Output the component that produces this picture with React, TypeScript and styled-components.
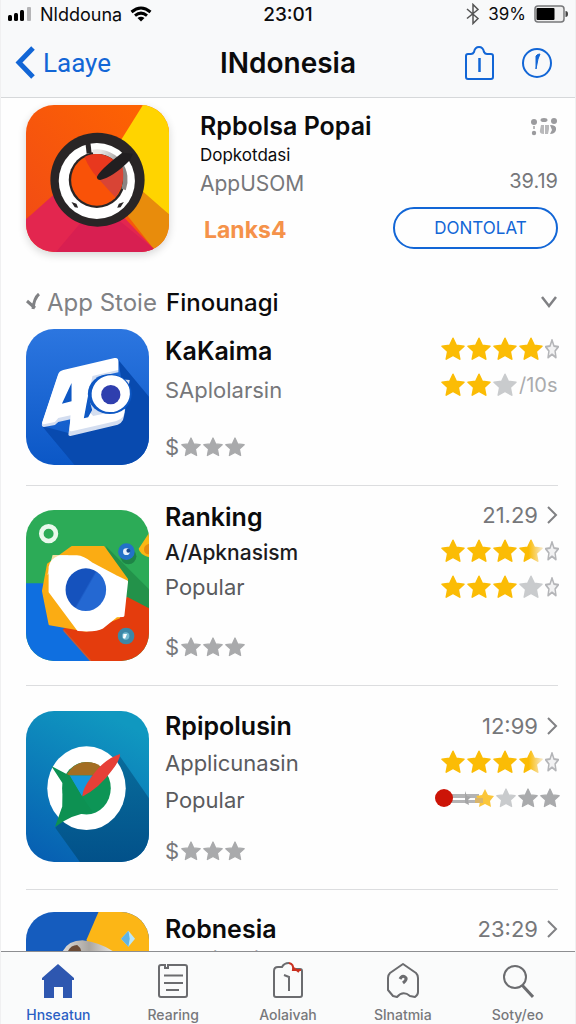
import React from "react";
import styled, { createGlobalStyle } from "styled-components";

const BLUE = "#1266d6";
const GOLD = "#fbbc05";
const GREY = "#76777a";

const GlobalStyle = createGlobalStyle`
  * { box-sizing: border-box; }
  body { margin: 0; background: #fefefe; font-family: Inter, "Liberation Sans", sans-serif; color: #0b0b0c; }
  h1, h2, h3, p, ul { margin: 0; padding: 0; font-size: inherit; font-weight: inherit; }
  button { font: inherit; background: none; border: 0; padding: 0; cursor: pointer; color: inherit; }
  a { color: inherit; text-decoration: none; }
  svg { display: block; flex: none; }
`;

const Screen = styled.div`
  height: 100vh;
  display: flex;
  flex-direction: column;
  border: solid #f0f0f1;
  border-width: 0 1px;
`;

const Header = styled.header`
  background: #f8f9fa;
  border-bottom: 1px solid #d6d8da;
`;

const StatusBar = styled.div`
  display: grid;
  grid-template-columns: 1fr auto 1fr;
  align-items: center;
  height: 28px;
  padding: 0 7px;
  font-size: 18px;
`;

const StatusSide = styled.div<{ $end?: boolean }>`
  display: flex;
  align-items: center;
  gap: 8px;
  justify-content: ${(p) => (p.$end ? "flex-end" : "flex-start")};
`;

const BatteryLevel = styled.span`
  font-size: 17px;
`;

const Clock = styled.time`
  font-size: 19px;
  font-weight: 500;
`;

const TitleBar = styled.div`
  display: grid;
  grid-template-columns: 1fr auto 1fr;
  align-items: center;
  height: 69px;
  padding: 0 14px;
`;

const BackButton = styled.button`
  display: flex;
  align-items: center;
  gap: 8px;
  justify-self: start;
  color: ${BLUE};
  font-family: Roboto, "Liberation Sans", sans-serif;
  font-size: 26px;
`;

const PageTitle = styled.h1`
  font-size: 28px;
  font-weight: 600;
`;

const TitleActions = styled.div`
  display: flex;
  justify-self: end;
  align-items: center;
  gap: 26px;
  padding-right: 8px;
  color: ${BLUE};
`;

const Content = styled.main`
  flex: 1;
  min-height: 0;
  overflow-y: auto;
  scrollbar-width: none;
`;

const AppIcon = styled.div<{ $shadow?: boolean }>`
  flex: none;
  border-radius: 28px;
  overflow: hidden;
  align-self: flex-start;
  box-shadow: ${(p) => (p.$shadow ? "0 3px 8px rgba(0,0,0,.16)" : "none")};
`;

const Featured = styled.section`
  display: flex;
  padding: 7px 17px 0 25px;
`;

const FeaturedText = styled.div`
  flex: 1;
  min-width: 0;
  padding: 5px 0 0 31px;
`;

const FeaturedSide = styled.div`
  display: flex;
  flex-direction: column;
  align-items: flex-end;
  padding-top: 12px;
`;

const FeaturedTitle = styled.h2`
  font-size: 25px;
  font-weight: 600;
  line-height: 32px;
  white-space: nowrap;
`;

const FeaturedSubtitle = styled.p`
  font-size: 17px;
  line-height: 26px;
`;

const FeaturedVendor = styled.p`
  font-size: 21px;
  line-height: 32px;
  color: ${GREY};
`;

const Brand = styled.p`
  font-size: 23px;
  font-weight: 700;
  line-height: 32px;
  padding: 14px 0 0 4px;
  color: #f5924a;
`;

const FeaturedScore = styled.span`
  font-size: 20px;
  line-height: 24px;
  margin: 32px 0 14px;
  color: ${GREY};
`;

const GetButton = styled.button`
  width: 165px;
  height: 42px;
  padding-left: 10px;
  border: 2px solid ${BLUE};
  border-radius: 21px;
  color: ${BLUE};
  font-size: 17px;
`;

const SectionBar = styled.div`
  display: grid;
  grid-template-columns: 140px 1fr auto;
  align-items: center;
  height: 36px;
  margin-top: 32px;
  padding: 0 17px 0 25px;
  font-size: 24px;
`;

const SectionSource = styled.span`
  display: flex;
  align-items: center;
  gap: 6px;
  color: #808184;
  white-space: nowrap;
`;

const SectionTitle = styled.h2`
  font-weight: 500;
`;

const List = styled.ul`
  list-style: none;
  padding: 0 17px 0 25px;
`;

const Row = styled.li<{ $height: number }>`
  display: flex;
  gap: 16px;
  height: ${(p) => p.$height}px;
  border-bottom: 1px solid #dcdddf;
`;

const IconSlot = styled.div<{ $top: number }>`
  padding-top: ${(p) => p.$top}px;
`;

const Details = styled.div<{ $top: number }>`
  flex: 1;
  display: flex;
  flex-direction: column;
  min-width: 0;
  padding: ${(p) => p.$top}px 0 20px;
`;

const Name = styled.h3<{ $pitch: number }>`
  font-size: 25px;
  font-weight: 600;
  line-height: ${(p) => p.$pitch}px;
  white-space: nowrap;
`;

const Line = styled.p<{ $tone?: string; $pitch: number; $strong?: boolean }>`
  font-size: ${(p) => (p.$strong ? 21 : 22)}px;
  font-weight: ${(p) => (p.$strong ? 500 : 400)};
  line-height: ${(p) => p.$pitch}px;
  color: ${(p) => p.$tone || "#5a5b5e"};
  white-space: nowrap;
`;

const Price = styled.div`
  display: flex;
  align-items: center;
  gap: 2px;
  margin-top: auto;
  font-size: 22px;
  line-height: 36px;
  color: ${GREY};
`;

const PriceSign = styled.span`
  width: 14px;
`;

const Meta = styled.div<{ $top: number }>`
  display: flex;
  flex-direction: column;
  width: 117px;
  padding-top: ${(p) => p.$top}px;
`;

const MetaLine = styled.div<{ $end?: boolean }>`
  display: flex;
  align-items: center;
  justify-content: ${(p) => (p.$end ? "flex-end" : "flex-start")};
  gap: ${(p) => (p.$end ? 8 : 2)}px;
  height: 36px;
  font-size: 22px;
  color: ${GREY};
`;

const Votes = styled.span`
  color: #aaabad;
  font-size: 20px;
`;

const Progress = styled.div`
  display: flex;
  align-items: center;
  gap: 2px;
  margin-left: -6px;
`;

const TabBar = styled.nav`
  display: grid;
  grid-template-columns: repeat(5, 1fr);
  height: 73px;
  background: #fafbfb;
  border-top: 1px solid #8d8e91;
`;

const Tab = styled.a<{ $active?: boolean }>`
  display: flex;
  flex-direction: column;
  align-items: center;
  gap: 6px;
  padding-top: 10px;
  font-size: 14px;
  font-weight: 500;
  line-height: 18px;
  color: ${(p) => (p.$active ? "#2b5fc4" : "#77787b")};
`;

const STAR =
  "M12 1.2 15.3 8.3 23 9.2 17.3 14.4 18.8 22.2 12 18.4 5.2 22.2 6.7 14.4 1 9.2 8.7 8.3Z";

type StarKind = "gold" | "half" | "grey" | "outline" | "pale";

function Star({ kind, size = 24 }: { kind: StarKind; size?: number }) {
  if (kind === "outline") {
    return (
      <svg width="14" height="20" viewBox="0 0 24 24" preserveAspectRatio="none" aria-hidden="true">
        <path d={STAR} fill="#f2f2f3" stroke="#b4b5b8" strokeWidth="2.500" strokeLinejoin="round" />
      </svg>
    );
  }
  const fill = { gold: GOLD, half: "url(#fade)", grey: "#a9aaac", pale: "#c9cbcd" }[kind];
  return (
    <svg width={size} height={size} viewBox="0 0 24 24" aria-hidden="true">
      {kind === "half" && (
        <linearGradient id="fade">
          <stop offset=".4" stopColor={GOLD} />
          <stop offset=".95" stopColor="#f7e3b4" />
        </linearGradient>
      )}
      <path d={STAR} fill={fill} stroke={fill} strokeWidth="1.500" strokeLinejoin="round" />
    </svg>
  );
}

function Stars({ kinds, size }: { kinds: StarKind[]; size?: number }) {
  return (
    <>
      {kinds.map((kind, i) => (
        <Star key={i} kind={kind} size={size} />
      ))}
    </>
  );
}

function Chevron() {
  return (
    <svg width="12" height="20" viewBox="0 0 12 20" fill="none" stroke="#808184" strokeWidth="2" aria-hidden="true">
      <path d="M2 2 10 10 2 18" />
    </svg>
  );
}

function DialArt() {
  return (
    <svg width="143" height="147" viewBox="50 27 428 441" preserveAspectRatio="none" aria-hidden="true">
      <defs>
        <linearGradient id="dialBg" x1="0" y1="1" x2="1" y2="0">
          <stop offset="0" stopColor="#f04a16" />
          <stop offset="1" stopColor="#ff6500" />
        </linearGradient>
        <linearGradient id="dialShade" x1="0" y1="0" x2="1" y2=".4">
          <stop offset=".2" stopColor="#e8e6e5" />
          <stop offset="1" stopColor="#8a8482" />
        </linearGradient>
      </defs>
      <path fill="url(#dialBg)" d="M50 27H478V468H50Z" />
      <path fill="#ffd400" d="M400 27H478V355L264 245Z" />
      <path fill="#e88c0c" d="M478 355 375 265 264 245 432 458 478 430Z" />
      <path fill="#e3264f" d="M50 370 190 245 264 280 432 458V468H50Z" />
      <path fill="#d81f51" d="M140 468 264 320 432 458V468Z" />
      <circle cx="264" cy="251" r="141" fill="#292526" />
      <circle cx="262" cy="255" r="114" fill="#fff" />
      <circle cx="262" cy="252" r="84" fill="#292526" />
      <path d="M250 168A84 84 0 0 1 342 280" fill="none" stroke="url(#dialShade)" strokeWidth="14" />
      <circle cx="262" cy="252" r="77" fill="#f95208" />
      <path fill="#e8381e" d="M225 183A78 78 0 0 1 340 252L264 245Q240 220 225 183Z" />
      <path fill="#d84435" d="M264 245 338 210Q350 262 317 304Z" />
      <path d="M235 138 239 172" stroke="#292526" strokeWidth="15" />
      <path fill="#292526" d="m186 318 15 5 5 12-10-1ZM343 318l-15 5-5 12 10-1Z" />
      <path fill="#211e20" d="M262 243Q270 222 338 170L370 173 361 193Q310 244 272 252Q263 252 262 243Z" />
    </svg>
  );
}

function LettersArt() {
  return (
    <svg width="123" height="136" viewBox="50 147 370 408" preserveAspectRatio="none" aria-hidden="true">
      <defs>
        <linearGradient id="lettersBg" x1="0" y1="0" x2="0" y2="1">
          <stop offset="0" stopColor="#2c76e0" />
          <stop offset="1" stopColor="#0b57c6" />
        </linearGradient>
      </defs>
      <path fill="url(#lettersBg)" d="M50 147H420V555H50Z" />
      <path fill="#084aaf" d="M328 240 420 350V555H196L98 438 180 460 350 390Z" />
      <path fill="#d4def0" d="M145 290Q150 278 162 275L316 237Q328 234 328 244V277L260 292 362 300 346 390Q348 426 326 434L184 468Q176 469 178 460L184 418 147 426 137 435 104 441Q96 439 98 431Z" />
      <path fill="#fff" d="M147 282Q150 273 162 270L316 234Q328 232 327 243V270L250 288 230 384 252 408 348 388Q347 416 322 423L188 454Q180 455 181 446L184 406 147 414 137 426 104 433Q97 433 99 426Z" />
      <path fill="#0e58c4" d="M187 309V364L158 371ZM237 345 224 415 237 412 249 390Z" />
      <ellipse cx="302" cy="342" rx="66" ry="60" fill="#0e58c4" />
      <ellipse cx="305" cy="341" rx="58" ry="55" fill="#fff" transform="rotate(-20 305 341)" />
      <circle cx="305" cy="344" r="29" fill="#2f3fae" />
    </svg>
  );
}

function ShapesArt() {
  return (
    <svg width="123" height="151" viewBox="50 27 370 453" preserveAspectRatio="none" aria-hidden="true">
      <defs>
        <linearGradient id="coin" x1="0" y1=".2" x2="1" y2=".8">
          <stop offset=".48" stopColor="#1552bd" />
          <stop offset=".52" stopColor="#2468d2" />
        </linearGradient>
      </defs>
      <path fill="#2cab57" d="M50 27H420V480H50Z" />
      <path fill="#23924a" d="M290 135 420 265V330L340 280Z" />
      <path fill="#0f6fe0" d="M50 247H110L250 480H50Z" />
      <path fill="#e43c0d" d="M355 288 420 322V480H244L160 385Z" />
      <path stroke="#c85b35" strokeWidth="4" d="m163 388 82 92" />
      <path fill="#fbac13" stroke="#fbac13" strokeWidth="6" strokeLinejoin="round" d="M188 138H284L354 235 330 350 232 389 121 370 101 270 116 190Z" />
      <path fill="#f3dda0" d="M130 162H178L150 200 114 222Z" />
      <path
        fill="#fff"
        stroke="#fff"
        strokeWidth="8"
        strokeLinejoin="round"
        d="M150 167H203Q222 168 246 187L320 226 353 242 342 344 322 345 280 379Q258 391 207 386L122 272V198Q126 176 150 167Z"
      />
      <ellipse cx="230" cy="266" rx="61" ry="64" fill="url(#coin)" />
      <circle cx="118" cy="98" r="22" fill="#2cab57" stroke="#e9f8ec" strokeWidth="14" />
      <circle cx="358" cy="166" r="24" fill="#1e8447" />
      <circle cx="352" cy="152" r="25" fill="#2372c8" />
      <circle cx="352" cy="152" r="10" fill="#e8f1fb" />
      <circle cx="358" cy="149" r="6" fill="#174a91" />
      <path fill="#fbb714" d="m420 96-31 47q2 16 31 26Z" />
      <path fill="#e68b10" d="M420 128q-16 4-15 18t15 14Z" />
      <circle cx="351" cy="405" r="25" fill="#3c87a6" />
      <circle cx="350" cy="405" r="11" fill="#74bad0" />
      <path fill="#fff" d="M343 399h11l-6 14-6-2Z" />
    </svg>
  );
}

function CompassArt() {
  return (
    <svg width="123" height="151" viewBox="50 33 370 454" preserveAspectRatio="none" aria-hidden="true">
      <defs>
        <linearGradient id="compassBg" x1=".6" y1="0" x2=".2" y2="1">
          <stop offset="0" stopColor="#1098c0" />
          <stop offset="1" stopColor="#0760b2" />
        </linearGradient>
        <linearGradient id="compassShade" x1="0" y1="0" x2="0" y2="1">
          <stop offset="0" stopColor="#086c9b" />
          <stop offset="1" stopColor="#02518a" />
        </linearGradient>
      </defs>
      <path fill="url(#compassBg)" d="M50 33H420V487H50Z" />
      <path fill="url(#compassShade)" d="M332 168 420 295V487H212L138 384Z" />
      <ellipse cx="232" cy="265" rx="118" ry="126" fill="#fff" />
      <ellipse cx="232" cy="265" rx="73" ry="79" fill="#0d9556" />
      <path fill="#a36d23" d="M172 224Q196 186 232 186T286 212L250 227H180Z" />
      <path fill="#1597dc" d="M180 227H250L218 290Z" />
      <path fill="#0d9152" d="M126 198 182 228 220 292 250 336Q190 342 137 382L159 320 160 250Z" />
      <path fill="#e73f37" d="M333 162Q334 178 310 210 270 266 220 290 218 270 246 232 286 176 333 162Z" />
    </svg>
  );
}

function RobotArt() {
  return (
    <svg width="123" height="151" viewBox="80 65 370 453" preserveAspectRatio="none" aria-hidden="true">
      <defs>
        <linearGradient id="helmet">
          <stop offset="0" stopColor="#dedbd7" />
          <stop offset=".5" stopColor="#aaa6a1" />
          <stop offset="1" stopColor="#efeeec" />
        </linearGradient>
      </defs>
      <path fill="#155cbe" d="M80 65H450V518H80Z" />
      <path fill="#fcb616" d="M298 65H450V518H340L262 148Z" />
      <path fill="url(#helmet)" d="M188 188Q204 150 250 150 310 158 352 190V300H188Z" />
      <path fill="#6a4a35" d="M204 188q8-24 30-24 14 10 12 24Z" />
      <path fill="#b9e6f8" d="m388 121 20 24-20 24-22-24Z" />
      <path fill="#5fb4e4" d="m388 121 4 24-4 24-22-24Z" />
    </svg>
  );
}

interface Listing {
  name: string;
  subtitle: string;
  tone?: string;
  strong?: boolean;
  caption?: string;
  score?: string;
  art: React.ReactNode;
  height: number;
  iconTop: number;
  textTop: number;
  metaTop: number;
  pitch: number;
  ratings: React.ReactNode[];
}

const listings: Listing[] = [
  {
    name: "KaKaima",
    subtitle: "SAplolarsin",
    tone: "#76777a",
    art: <LettersArt />,
    height: 166,
    iconTop: 9,
    textTop: 12,
    metaTop: 11,
    pitch: 39,
    ratings: [
      <Stars kinds={["gold", "gold", "gold", "gold", "outline"]} />,
      <>
        <Stars kinds={["gold", "gold", "pale"]} />
        <Votes>/10s</Votes>
      </>,
    ],
  },
  {
    name: "Ranking",
    subtitle: "A/Apknasism",
    tone: "#1c1c1e",
    strong: true,
    caption: "Popular",
    score: "21.29",
    art: <ShapesArt />,
    height: 200,
    iconTop: 24,
    textTop: 14,
    metaTop: 11,
    pitch: 35,
    ratings: [
      <Stars kinds={["gold", "gold", "gold", "half", "outline"]} />,
      <Stars kinds={["gold", "gold", "gold", "pale", "outline"]} />,
    ],
  },
  {
    name: "Rpipolusin",
    subtitle: "Applicunasin",
    caption: "Popular",
    score: "12:99",
    art: <CompassArt />,
    height: 204,
    iconTop: 25,
    textTop: 22,
    metaTop: 22,
    pitch: 37,
    ratings: [
      <Stars kinds={["gold", "gold", "gold", "half", "outline"]} />,
      <Progress>
        <svg width="59" height="20" viewBox="0 0 59 20" aria-hidden="true">
          <path fill="#b4b4b5" d="M14 6H44V10H14ZM14 12H44V15H14Z" />
          <path fill="#a5a5a6" d="M30 3 32 8 36 9 33 12 34 17 30 15Z" />
          <path fill="#fbc63a" d="m50 1 3 6 6 1-4 5 1 6-6-3-6 3 1-6-4-5 6-1Z" />
          <path fill="#d9b56a" d="M40 10h8v5h-8Z" />
          <circle cx="9" cy="10" r="9" fill="#cc1407" />
        </svg>
        <Stars kinds={["pale", "grey", "grey"]} size={20} />
      </Progress>,
    ],
  },
  {
    name: "Robnesia",
    subtitle: "Applikasin",
    score: "23:29",
    art: <RobotArt />,
    height: 204,
    iconTop: 22,
    textTop: 24,
    metaTop: 21,
    pitch: 30,
    ratings: [],
  },
];

export default function App() {
  return (
    <Screen>
      <GlobalStyle />
      <Header>
        <StatusBar>
          <StatusSide>
            <svg width="24" height="14" viewBox="0 0 24 14" aria-hidden="true">
              <rect x="0" y="8" width="4" height="6" rx="1.500" />
              <rect x="6" y="6" width="4" height="8" rx="1.500" />
              <rect x="12" y="3" width="4" height="11" rx="1.500" />
              <rect x="19" y="0" width="4" height="14" rx="1" fill="#b5b5b7" />
            </svg>
            <span>Nlddouna</span>
            <svg width="22" height="16" viewBox="0 0 22 16" fill="none" stroke="#000" strokeWidth="3" aria-hidden="true">
              <path d="M1.500 6Q11-2 20.500 6M5 9.600Q11 4.600 17 9.600" />
              <path d="m7.500 12q3.500-2.500 7 0L11 15.500Z" fill="#000" stroke="none" />
            </svg>
          </StatusSide>
          <Clock>23:01</Clock>
          <StatusSide $end>
            <svg width="14" height="22" viewBox="0 0 14 22" fill="none" stroke="#555" strokeWidth="1.500" aria-hidden="true">
              <path d="M1 6 12 15.500 7 20.500V1.500L12 6.500 1 15.500" />
            </svg>
            <BatteryLevel>39%</BatteryLevel>
            <svg width="34" height="18" viewBox="0 0 34 18" aria-hidden="true">
              <rect x="1" y="1" width="29" height="16" rx="3" fill="#eee" stroke="#77787a" strokeWidth="1.500" />
              <rect x="2.500" y="3" width="18" height="12" rx="1" />
              <path d="M31.500 6q2.500 0 2.500 3t-2.500 3Z" fill="#444" />
            </svg>
          </StatusSide>
        </StatusBar>
        <TitleBar>
          <BackButton type="button">
            <svg width="20" height="33" viewBox="0 0 20 33" fill="none" stroke={BLUE} strokeWidth="5" aria-hidden="true">
              <path d="M18 2 4 16.500 18 31" />
            </svg>
            Laaye
          </BackButton>
          <PageTitle>INdonesia</PageTitle>
          <TitleActions>
            <button type="button" aria-label="Share">
              <svg width="31" height="36" viewBox="0 0 31 36" fill="none" stroke={BLUE} strokeWidth="2" strokeLinejoin="round" aria-hidden="true">
                <path d="M4 9H7Q9 9 10 7 11 2 15 2T20 7Q21 9 23 9H27Q29 9 29 11V32Q29 34 27 34H4Q2 34 2 32V11Q2 9 4 9Z" />
                <path d="M15.500 13V27" strokeWidth="2.500" />
              </svg>
            </button>
            <button type="button" aria-label="Information">
              <svg width="32" height="32" viewBox="0 0 32 32" fill="none" stroke={BLUE} strokeWidth="2" aria-hidden="true">
                <circle cx="16" cy="16" r="14" />
                <path d="M19 7Q16 7 15 9V22L17 12Z" fill={BLUE} strokeWidth="1" />
              </svg>
            </button>
          </TitleActions>
        </TitleBar>
      </Header>

      <Content>
        <Featured>
          <AppIcon $shadow>
            <DialArt />
          </AppIcon>
          <FeaturedText>
            <FeaturedTitle>Rpbolsa Popai</FeaturedTitle>
            <FeaturedSubtitle>Dopkotdasi</FeaturedSubtitle>
            <FeaturedVendor>AppUSOM</FeaturedVendor>
            <Brand>Lanks4</Brand>
          </FeaturedText>
          <FeaturedSide>
            <svg width="28" height="20" viewBox="0 0 28 20" fill="#9b9b9e" aria-hidden="true">
              <circle cx="4" cy="5" r="3" />
              <ellipse cx="14" cy="3" rx="3.500" ry="2" />
              <circle cx="24" cy="4" r="3" />
              <circle cx="4" cy="16" r="2.200" />
              <path d="M4 9v3" stroke="#b9b9bb" strokeWidth="2" />
              <path d="M11 8h3v9q-5 0-4-4ZM15 8h4v4l-1 5h-3Z" opacity=".7" />
              <path d="M20 8q7 0 6 5-1 4-6 4l2-4Z" />
            </svg>
            <FeaturedScore>39.19</FeaturedScore>
            <GetButton type="button">DONTOLAT</GetButton>
          </FeaturedSide>
        </Featured>

        <SectionBar>
          <SectionSource>
            <svg width="15" height="18" viewBox="0 0 15 18" fill="none" stroke="#808184" strokeWidth="3" aria-hidden="true">
              <path d="M1 8 9 15M13 1Q8 5 7 16" />
            </svg>
            App Stoie
          </SectionSource>
          <SectionTitle>Finounagi</SectionTitle>
          <button type="button" aria-label="Expand section">
            <svg width="18" height="14" viewBox="0 0 18 14" fill="none" stroke="#808184" strokeWidth="2.500" aria-hidden="true">
              <path d="M2 2 9 11 16 2" />
            </svg>
          </button>
        </SectionBar>

        <List>
          {listings.map((app) => (
            <Row key={app.name} $height={app.height}>
              <IconSlot $top={app.iconTop}>
                <AppIcon>{app.art}</AppIcon>
              </IconSlot>
              <Details $top={app.textTop}>
                <Name $pitch={app.pitch}>{app.name}</Name>
                <Line $pitch={app.pitch} $tone={app.tone} $strong={app.strong}>
                  {app.subtitle}
                </Line>
                {app.caption && <Line $pitch={app.pitch}>{app.caption}</Line>}
                <Price>
                  <PriceSign>$</PriceSign>
                  <Stars kinds={["grey", "grey", "grey"]} size={20} />
                </Price>
              </Details>
              <Meta $top={app.metaTop}>
                {app.score && (
                  <MetaLine $end>
                    {app.score}
                    <Chevron />
                  </MetaLine>
                )}
                {app.ratings.map((rating, i) => (
                  <MetaLine key={i}>{rating}</MetaLine>
                ))}
              </Meta>
            </Row>
          ))}
        </List>
      </Content>

      <TabBar>
        <Tab href="#home" $active>
          <svg width="34" height="38" viewBox="0 0 34 38" aria-hidden="true">
            <path fill="#2e57b0" d="M17 2 33 16V18H31V36H22V25H13V36H3V18H1V16Z" />
          </svg>
          Hnseatun
        </Tab>
        <Tab href="#ranking">
          <svg width="32" height="38" viewBox="0 0 32 38" fill="none" stroke="#6b6c6f" strokeWidth="2" aria-hidden="true">
            <path d="M4 3H8V6H11V3H28Q30 3 30 5V33Q30 35 28 35H4Q2 35 2 33V5Q2 3 4 3Z" />
            <path d="M7 13.500H26M7 21H26M9 28H22" />
          </svg>
          Rearing
        </Tab>
        <Tab href="#updates">
          <svg width="32" height="38" viewBox="0 0 32 38" fill="none" stroke="#6b6c6f" strokeWidth="2" aria-hidden="true">
            <path d="M24 7H28Q30 7 30 9V33Q30 35 28 35H4Q2 35 2 33V9Q2 5 6 5H10Q12 1 17 1" />
            <path d="M12 13 17 15V29" />
            <path d="M17 1Q22 2 21 8H29M22 6 27 10" stroke="#c9301f" />
          </svg>
          Aolaivah
        </Tab>
        <Tab href="#places">
          <svg width="32" height="38" viewBox="0 0 32 38" fill="none" stroke="#6b6c6f" strokeWidth="2" strokeLinejoin="round" aria-hidden="true">
            <path d="M16 2 29 11Q31 13 31 16V30Q31 33 28 35L23 34Q16 28 10 35L6 34 1 28V16Q1 13 3 11Z" />
            <path d="M13 17Q15 13 18 15T16 21" strokeWidth="3" />
          </svg>
          Slnatmia
        </Tab>
        <Tab href="#search">
          <svg width="32" height="38" viewBox="0 0 32 38" fill="none" stroke="#6b6c6f" strokeWidth="2" aria-hidden="true">
            <circle cx="13" cy="15" r="11" />
            <path d="M20 23 31 35" strokeWidth="3" />
          </svg>
          Soty/eo
        </Tab>
      </TabBar>
    </Screen>
  );
}
